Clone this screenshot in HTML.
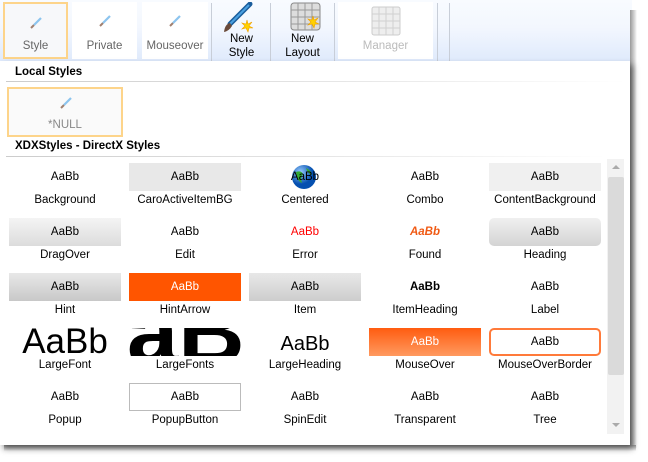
<!DOCTYPE html>
<html><head><style>
*{margin:0;padding:0;box-sizing:border-box}
body{width:648px;height:462px;background:#fff;font-family:"Liberation Sans",sans-serif;position:relative;overflow:hidden;color:#000}
.tb{position:absolute;left:0;top:0;width:632px;height:61px;background:linear-gradient(#f8fbff,#f3f7fe 45%,#dfeafc);}
.btn{position:absolute;top:2px;height:57px;background:#fff;text-align:center;font-size:11.5px;color:#666}
.btn .lb{position:absolute;left:0;right:0;top:38px}
.sep{position:absolute;top:3px;width:1px;height:58px;background:#c8ced8}
.brush{position:absolute;left:50%;top:12px;margin-left:-7px;width:14px;height:14px}
.panel{position:absolute;left:0;top:61px;width:630px;height:384px;background:#fff;box-shadow:3px 4px 6px rgba(0,0,0,.45)}
.shR{position:absolute;left:630px;top:10px;width:7px;height:438px;background:linear-gradient(90deg,#999,#ddd 70%,#fff)}
.shB{position:absolute;left:4px;top:445px;width:632px;height:6px;background:linear-gradient(#999,#ddd 70%,#fff)}
.h{position:absolute;left:15px;font-size:11.5px;font-weight:bold}
.hl{position:absolute;left:6px;height:1px;background:linear-gradient(90deg,#ccc,#eee 70%,#fff)}
.cell{position:absolute;width:120px;height:55px;text-align:center;font-size:11.5px}
.sw{position:absolute;left:4px;width:112px;top:0;height:28px;line-height:28px;font-size:11.5px}
.cap{position:absolute;left:0;right:0;top:31px;font-size:11.5px}
</style></head><body>
<div class="tb"></div>
<div class="btn" style="left:3px;width:65px;border:2px solid #fdd48a;background:#f7f8fa"><svg class="brush" viewBox="0 0 14 14"><path d="M2 12 L5 9" stroke="#a08070" stroke-width="2"/><path d="M5 9 L12 2" stroke="#8cc4ee" stroke-width="2.2"/></svg><div class="lb" style="top:36px">Style</div></div>
<div class="btn" style="left:72px;width:65px"><svg class="brush" viewBox="0 0 14 14"><path d="M2 12 L5 9" stroke="#a08070" stroke-width="2"/><path d="M5 9 L12 2" stroke="#8cc4ee" stroke-width="2.2"/></svg><div class="lb">Private</div></div>
<div class="btn" style="left:142px;width:66px"><svg class="brush" viewBox="0 0 14 14"><path d="M2 12 L5 9" stroke="#a08070" stroke-width="2"/><path d="M5 9 L12 2" stroke="#8cc4ee" stroke-width="2.2"/></svg><div class="lb">Mouseover</div></div>
<div class="sep" style="left:211px"></div>
<svg style="position:absolute;left:222px;top:2px" width="34" height="32" viewBox="0 0 34 32"><path d="M8 22 L28 2" stroke="#1a5d9c" stroke-width="5" stroke-linecap="round"/><path d="M8 22 L27 3" stroke="#4aa0e0" stroke-width="2"/><path d="M2 30 Q3 22 8 21 L10 24 Q7 29 2 30Z" fill="#6a4a3a"/><path d="M25 18 L26 22 L30 20 L27 24 L31 26 L27 26 L26 30 L24 26 L20 27 L23 24 L20 21 L24 22Z" fill="#ffd200" stroke="#f0a000" stroke-width=".6"/></svg>
<div style="position:absolute;left:213px;width:57px;top:32px;text-align:center;font-size:11.5px;line-height:14px">New<br>Style</div>
<div class="sep" style="left:270px"></div>
<svg style="position:absolute;left:290px;top:2px" width="32" height="30" viewBox="0 0 32 30"><rect x="1" y="1" width="29" height="27" rx="3" fill="#ddd" stroke="#888"/><path d="M1 8H30M1 15H30M1 22H30M8 1V28M15 1V28M22 1V28" stroke="#999"/><path d="M23 14 L24 18 L28 16 L25 20 L29 22 L25 22 L24 26 L22 22 L18 23 L21 20 L18 17 L22 18Z" fill="#ffd200" stroke="#f0a000" stroke-width=".6"/></svg>
<div style="position:absolute;left:271px;width:63px;top:32px;text-align:center;font-size:11.5px;line-height:14px">New<br>Layout</div>
<div class="sep" style="left:334px"></div>
<div class="btn" style="left:338px;width:95px;color:#bbb"><svg style="position:absolute;left:33px;top:4px" width="30" height="30" viewBox="0 0 30 30"><rect x="1" y="1" width="28" height="28" rx="2" fill="#eee" stroke="#ccc"/><path d="M1 8H29M1 15H29M1 22H29M8 1V29M15 1V29M22 1V29" stroke="#d0d0d0"/></svg><div class="lb">Manager</div></div>
<div class="sep" style="left:437px"></div>
<div class="sep" style="left:449px"></div>
<div class="shR"></div><div class="shB"></div>
<div class="panel"></div>
<div class="h" style="top:66px">Local Styles</div>
<div class="hl" style="top:81px;width:620px"></div>
<div style="position:absolute;left:7px;top:87px;width:116px;height:50px;border:2px solid #fdd48a;background:#fafafa;text-align:center;font-size:11.5px;color:#888"><svg style="position:absolute;left:50px;top:7px" width="14" height="14" viewBox="0 0 14 14"><path d="M2 12 L5 9" stroke="#a08070" stroke-width="2"/><path d="M5 9 L12 2" stroke="#8cc4ee" stroke-width="2.2"/></svg><div style="position:absolute;left:0;right:0;top:30px">*NULL</div></div>
<div class="h" style="top:140px">XDXStyles - DirectX Styles</div>
<div class="hl" style="top:156px;width:600px"></div>

<div class="cell" style="left:5px;top:163px"><div class="sw">AaBb</div><div class="cap">Background</div></div>
<div class="cell" style="left:125px;top:163px"><div class="sw" style="background:#e8e8e8">AaBb</div><div class="cap">CaroActiveItemBG</div></div>
<div class="cell" style="left:245px;top:163px"><svg style="position:absolute;left:46px;top:1px" width="26" height="26"><defs><radialGradient id="g" cx=".35" cy=".3"><stop offset="0" stop-color="#9cf"/><stop offset="1" stop-color="#0550b0"/></radialGradient></defs><circle cx="13" cy="13" r="12" fill="url(#g)"/><path d="M5 8 Q10 6 12 10 Q9 14 11 19 Q6 17 5 8Z M15 4 Q20 6 21 11 Q17 10 15 4Z" fill="#3a3"/></svg><div class="sw">AaBb</div><div class="cap">Centered</div></div>
<div class="cell" style="left:365px;top:163px"><div class="sw">AaBb</div><div class="cap">Combo</div></div>
<div class="cell" style="left:485px;top:163px"><div class="sw" style="background:#f0f0f0">AaBb</div><div class="cap">ContentBackground</div></div>

<div class="cell" style="left:5px;top:218px"><div class="sw" style="background:linear-gradient(#f4f4f4,#dcdcdc)">AaBb</div><div class="cap">DragOver</div></div>
<div class="cell" style="left:125px;top:218px"><div class="sw">AaBb</div><div class="cap">Edit</div></div>
<div class="cell" style="left:245px;top:218px"><div class="sw" style="color:#f00">AaBb</div><div class="cap">Error</div></div>
<div class="cell" style="left:365px;top:218px"><div class="sw" style="color:#f05a14;font-weight:bold;font-style:italic">AaBb</div><div class="cap">Found</div></div>
<div class="cell" style="left:485px;top:218px"><div class="sw" style="background:linear-gradient(#f0f0f0,#d4d4d4);border-radius:5px">AaBb</div><div class="cap">Heading</div></div>

<div class="cell" style="left:5px;top:273px"><div class="sw" style="background:linear-gradient(#e8e8e8,#c8c8c8)">AaBb</div><div class="cap">Hint</div></div>
<div class="cell" style="left:125px;top:273px"><div class="sw" style="background:#ff5500;color:#fff">AaBb</div><div class="cap">HintArrow</div></div>
<div class="cell" style="left:245px;top:273px"><div class="sw" style="background:linear-gradient(#e8e8e8,#cdcdcd)">AaBb</div><div class="cap">Item</div></div>
<div class="cell" style="left:365px;top:273px"><div class="sw" style="font-weight:bold">AaBb</div><div class="cap">ItemHeading</div></div>
<div class="cell" style="left:485px;top:273px"><div class="sw">AaBb</div><div class="cap">Label</div></div>

<div class="cell" style="left:5px;top:328px"><div style="position:absolute;left:0;right:0;top:-3px;font-size:35px;line-height:33px;height:30px;overflow:hidden">AaBb</div><div class="cap">LargeFont</div></div>
<div class="cell" style="left:125px;top:328px"><div style="position:absolute;left:4px;width:112px;top:0;height:28px;overflow:hidden"><div style="position:absolute;left:-2px;top:-42px;font-size:92px;font-weight:bold;line-height:92px;white-space:nowrap">aB</div></div><div class="cap">LargeFonts</div></div>
<div class="cell" style="left:245px;top:328px"><div class="sw" style="font-size:20px;line-height:32px">AaBb</div><div class="cap">LargeHeading</div></div>
<div class="cell" style="left:365px;top:328px"><div class="sw" style="background:linear-gradient(#ff5c10,#ff9a60);color:#fff">AaBb</div><div class="cap">MouseOver</div></div>
<div class="cell" style="left:485px;top:328px"><div class="sw" style="border:2px solid #ff7a3a;border-radius:5px;line-height:24px">AaBb</div><div class="cap">MouseOverBorder</div></div>

<div class="cell" style="left:5px;top:383px"><div class="sw">AaBb</div><div class="cap">Popup</div></div>
<div class="cell" style="left:125px;top:383px"><div class="sw" style="border:1px solid #bbb;line-height:26px">AaBb</div><div class="cap">PopupButton</div></div>
<div class="cell" style="left:245px;top:383px"><div class="sw">AaBb</div><div class="cap">SpinEdit</div></div>
<div class="cell" style="left:365px;top:383px"><div class="sw">AaBb</div><div class="cap">Transparent</div></div>
<div class="cell" style="left:485px;top:383px"><div class="sw">AaBb</div><div class="cap">Tree</div></div>

<div style="position:absolute;left:607px;top:159px;width:17px;height:275px;background:#f2f2f2"></div>
<div style="position:absolute;left:608px;top:177px;width:16px;height:198px;background:#dadada;border-radius:2px"></div>
<div style="position:absolute;left:612px;top:165px;border-left:4px solid transparent;border-right:4px solid transparent;border-bottom:4px solid #aaa"></div>
<div style="position:absolute;left:612px;top:423px;border-left:4px solid transparent;border-right:4px solid transparent;border-top:4px solid #aaa"></div>
</body></html>
